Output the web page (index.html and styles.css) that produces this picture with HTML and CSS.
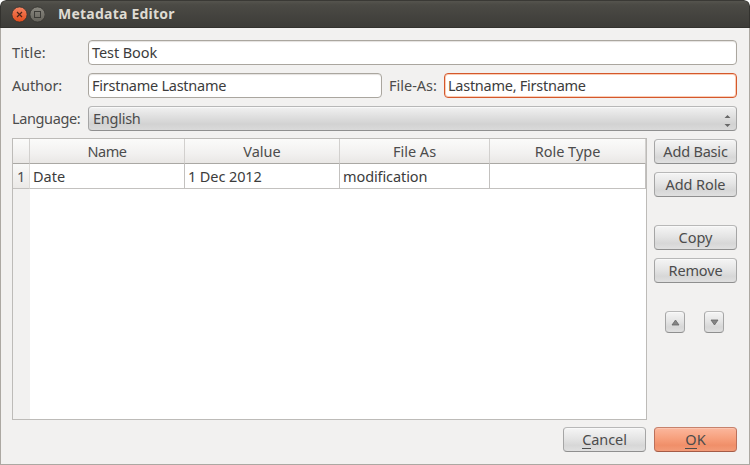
FILE: index.html
```html
<!DOCTYPE html>
<html lang="en">
<head>
<meta charset="utf-8">
<title>Metadata Editor</title>
<link rel="stylesheet" href="styles.css">
</head>
<body>
<div class="window">
  <header class="titlebar">
    <svg class="controls" width="34" height="18" viewBox="0 0 34 18">
      <defs>
        <linearGradient id="red" x1="0" y1="0" x2="0" y2="1"><stop offset="0" stop-color="#f58462"/><stop offset="1" stop-color="#e24c1c"/></linearGradient>
        <linearGradient id="gray" x1="0" y1="0" x2="0" y2="1"><stop offset="0" stop-color="#8a8880"/><stop offset="1" stop-color="#64625b"/></linearGradient>
      </defs>
      <circle cx="8.5" cy="8.5" r="7.6" fill="url(#red)" stroke="#353430" stroke-width=".8"/>
      <path d="M6 6l5 5M11 6l-5 5" stroke="#4b2519" stroke-width="1.2"/>
      <circle cx="26.5" cy="8.5" r="7.6" fill="url(#gray)" stroke="#353430" stroke-width=".8"/>
      <rect x="23.5" y="5.500" width="6" height="6" fill="none" stroke="#3c3b37"/>
    </svg>
    <h1 class="caption">Metadata Editor</h1>
  </header>
  <main class="content">
    <div class="row"><label class="label t-title">Title:</label><div class="field"><span class="t-book">Test Book</span></div></div>
    <div class="row"><label class="label t-author">Author:</label><div class="field field-author"><span class="t-first">Firstname Lastname</span></div><label class="label-as">File-As:</label><div class="field focused"><span class="t-last">Lastname, Firstname</span></div></div>
    <div class="row"><label class="label t-language">Language:</label><div class="combo"><span class="t-english">English</span>
      <svg class="spin" width="7" height="14" viewBox="0 0 7 14"><path d="M.5 4L3.500 1l3 3zM.5 10l3 3 3-3z" fill="#686868"/></svg></div></div>
    <div class="middle">
      <div class="table">
        <div class="cell head corner"></div>
        <div class="cell head"><span class="t-name">Name</span></div>
        <div class="cell head"><span class="t-value">Value</span></div>
        <div class="cell head"><span class="t-fileas">File As</span></div>
        <div class="cell head"><span class="t-role">Role Type</span></div>
        <div class="cell num">1</div>
        <div class="cell"><span class="t-date">Date</span></div>
        <div class="cell"><span class="t-dec">1 Dec 2012</span></div>
        <div class="cell"><span class="t-mod">modification</span></div>
        <div class="cell"></div>
        <div class="gutter"></div>
      </div>
      <div class="side">
        <div class="button"><span class="t-basic">Add Basic</span></div>
        <div class="button"><span class="t-addrole">Add Role</span></div>
        <div class="button gap"><span class="t-copy">Copy</span></div>
        <div class="button"><span class="t-remove">Remove</span></div>
        <div class="arrows">
          <div class="button small"><svg width="9" height="7" viewBox="0 0 9 7"><path d="M1 6l3.500-5L8 6z" fill="#858585" stroke="#666" stroke-width=".8"/></svg></div>
          <div class="button small"><svg width="9" height="7" viewBox="0 0 9 7"><path d="M1 1h7L4.500 6z" fill="#858585" stroke="#666" stroke-width=".8"/></svg></div>
        </div>
      </div>
    </div>
    <div class="footer">
      <div class="button"><span class="t-cancel"><span class="key">C</span>ancel</span></div>
      <div class="button primary"><span class="t-ok"><span class="key">O</span>K</span></div>
    </div>
  </main>
</div>
</body>
</html>
```
FILE: styles.css
```css
* { box-sizing: border-box; }
body {
  margin: 0;
  background: #fff;
  color: #3c3c3c;
  font: 14.5px/23px "Noto Sans", "Open Sans", sans-serif;
  white-space: nowrap;
}
.window {
  width: 750px;
  height: 465px;
  background: #f2f1f0;
  border-radius: 6px 6px 0 0;
  overflow: hidden;
}
.titlebar {
  height: 28px;
  display: flex;
  align-items: center;
  padding-left: 10px;
  background: linear-gradient(#55544e, #4b4a45 15%, #3d3c38);
  border: 1px solid #33322e;
  border-top-color: #3a3935;
  border-radius: 6px 6px 0 0;
}
.controls { margin-top: 1px; flex: none; }
.caption { margin: 0 0 0 13px; font-size: 14px; line-height: 24px; color: #dfdbd2; letter-spacing: .23px; }
.content {
  height: 437px;
  padding: 12px 12px 0 11px;
  border: 1px solid #aca8a2;
  border-top: 0;
}
.row { display: flex; height: 25px; margin-bottom: 8px; }
.label { width: 76px; flex: none; color: #4c4c4c; line-height: 25px; }
.label-as { width: 62px; padding-left: 7px; flex: none; color: #4c4c4c; line-height: 25px; letter-spacing: 0; }
.field {
  flex: 1;
  padding-left: 3px;
  background: #fff;
  border: 1px solid #aaa69f;
  border-radius: 4px;
  box-shadow: inset 0 1px 1px #e4e2df;
}
.field-author { flex: none; width: 294px; }
.focused { border-color: #d4582c; box-shadow: inset 0 0 0 1px #fbcdb5; }
.combo, .button {
  border: 1px solid #a5a5a5;
  border-top-color: #b8b8b8;
  border-bottom-color: #8f8f8f;
  border-radius: 4px;
  background: linear-gradient(#f1f1f1, #dedede 45%, #d2d2d2 75%, #dadada);
  box-shadow: inset 0 1px #f9f9f9;
  color: #4c4c4c;
}
.combo { flex: 1; display: flex; justify-content: space-between; padding: 0 5px 0 4px; }
.spin { margin-top: 7px; }
.button { width: 83px; height: 25px; text-align: center; background: linear-gradient(#f5f5f5, #e5e5e5 45%, #d7d7d7 75%, #e0e0e0); }
.middle { display: flex; gap: 7px; height: 282px; margin-top: -1px; }
.table {
  width: 635px;
  display: grid;
  grid-template-columns: 17px 155px 155px 150px 156px;
  grid-template-rows: 25px 25px 1fr;
  background: #fff;
  border: 1px solid #bdbbb8;
}
.cell { padding-left: 3px; border-right: 1px solid #c3c1bf; border-bottom: 1px solid #c3c1bf; line-height: 25px; }
.head { padding-left: 0; text-align: center; color: #4c4c4c; background: linear-gradient(#fbfbfa, #f2f1f0 60%, #e9e7e5); border-right-color: #d2d0ce; border-bottom-color: #aaa8a4; }
.num { padding-left: 4px; background: linear-gradient(#f9f9f8, #ebe9e7); border-right-color: #dddbd8; color: #4c4c4c; }
.gutter { background: #f2f1f0; }
.side { padding-top: 1px; }
.side .button { margin-bottom: 8px; }
.side .gap { margin-top: 28px; }
.arrows { display: flex; gap: 19px; padding: 20px 0 0 11px; }
.small { display: flex; align-items: center; justify-content: center; width: 20px; height: 22px; padding-top: 1px; }
.footer { display: flex; justify-content: flex-end; gap: 8px; margin-top: 7px; }
.primary { background: linear-gradient(#fbb79d, #f7a07d 45%, #f08f69 75%, #f39b78); border-color: #bb705a; border-top-color: #c7826c; border-bottom-color: #a45b46; box-shadow: inset 0 1px #fcc4af; }
.key { box-shadow: inset 0 -1px #4c4c4c; display: inline-block; height: 21px; line-height: 23px; vertical-align: top; }
.t-title { letter-spacing: .15px; }
.t-author { letter-spacing: -.15px; }
.t-language { letter-spacing: -.38px; }
.t-book { letter-spacing: -.08px; }
.t-first, .t-last { letter-spacing: -.26px; }
.t-english { letter-spacing: -.25px; }
.t-name { letter-spacing: -.45px; }
.t-dec { letter-spacing: -.1px; }
.t-mod { letter-spacing: -.1px; }
.t-basic { letter-spacing: -.2px; }
.t-addrole { letter-spacing: -.1px; }
.t-remove { letter-spacing: -.15px; }
.t-cancel { letter-spacing: -.1px; }
```
